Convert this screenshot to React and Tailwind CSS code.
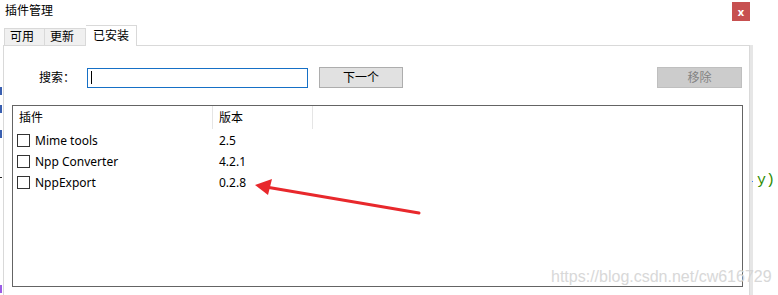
import React from "react";

const font = { fontFamily: '"Noto Sans", "Noto Sans CJK SC", sans-serif' };

function Checkbox() {
  return <div className="w-[13px] h-[13px] border border-[#333333] bg-white shrink-0" />;
}

function Row({ name, ver }) {
  return (
    <div className="flex items-center h-[21px] text-[12px] text-[#000000]">
      <div className="w-[200px] flex items-center pl-[4px] gap-[5px]">
        <Checkbox />
        <span>{name}</span>
      </div>
      <span className="pl-[6px]">{ver}</span>
    </div>
  );
}

export default function App() {
  return (
    <div className="relative w-[778px] h-[295px] bg-white overflow-hidden" style={font}>
      {/* background editor fragments on the left edge */}
      <div className="absolute left-0 top-[87px] w-[2px] h-[8px] bg-[#3a5fb0]" />
      <div className="absolute left-0 top-[105px] w-[2px] h-[8px] bg-[#3a5fb0]" />
      <div className="absolute left-0 top-[130px] w-[2px] h-[8px] bg-[#3a5fb0]" />
      <div className="absolute left-0 top-[177px] w-[2px] h-[1px] bg-[#222]" />
      <div className="absolute left-0 top-[285px] w-[2px] h-[8px] bg-[#9b5de5]" />

      {/* title bar */}
      <div className="flex items-start justify-between h-[25px]">
        <div className="pl-[5px] pt-[2px] text-[12px] text-[#000000] leading-[18px]">插件管理</div>
        <div className="mt-[2px] mr-[28px] w-[18px] h-[19px] bg-[#c75050] flex items-center justify-center text-white text-[11px] font-bold leading-none">
          x
        </div>
      </div>

      {/* tabs */}
      <div className="flex items-end pl-[4px] h-[20px] relative z-10">
        <div className="w-[41px] h-[17px] bg-[#f0f0f0] border border-[#d9d9d9] border-b-0 text-[12px] leading-[16px] pl-[5px]">可用</div>
        <div className="w-[41px] h-[17px] bg-[#f0f0f0] border border-[#d9d9d9] border-l-0 border-b-0 text-[12px] leading-[16px] pl-[5px]">更新</div>
        <div className="w-[51px] h-[21px] bg-white border border-[#d9d9d9] border-l-0 border-b-0 mb-[-1px] text-[12px] leading-[19px] pl-[7px]">已安装</div>
      </div>

      {/* panel */}
      <div className="flex">
        <div className="ml-[3px] w-[747px] h-[260px] border-t border-l border-r border-[#d9d9d9] bg-white">
          <div className="flex items-center h-[21px] mt-[21px]">
            <div className="w-[71px] text-right text-[12px] text-black">搜索：</div>
            <div className="ml-[12px] w-[221px] h-[20px] border border-[#1670c6] flex items-center pl-[3px]">
              <div className="w-px h-[13px] bg-black" />
            </div>
            <div className="ml-[11px] w-[84px] h-[21px] bg-[#e1e1e1] border border-[#adadad] flex items-center justify-center text-[12px] text-black">
              下一个
            </div>
            <div className="ml-[254px] w-[85px] h-[21px] bg-[#cccccc] border border-[#bfbfbf] flex items-center justify-center text-[12px] text-[#838383]">
              移除
            </div>
          </div>

          <div className="ml-[8px] mt-[17px] w-[731px] h-[182px] border border-[#646464] bg-white">
            <div className="flex h-[23px] text-[12px] text-black">
              <div className="w-[200px] pl-[6px] flex items-center border-r border-[#e5e5e5]">插件</div>
              <div className="w-[100px] pl-[6px] flex items-center border-r border-[#e5e5e5]">版本</div>
            </div>
            <div className="pt-[1px]">
              <Row name="Mime tools" ver="2.5" />
              <Row name="Npp Converter" ver="4.2.1" />
              <Row name="NppExport" ver="0.2.8" />
            </div>
          </div>
        </div>
        <div className="w-[3px] h-[250px] bg-[#e6e6e6]" />
      </div>

      {/* background editor text on the right */}
      <div className="absolute left-[752px] top-[181px] w-[1px] h-[1px] bg-[#3b82f6]" />
      <span
        className="absolute left-[757px] top-[170px] text-[15px] text-[#2e8b00]"
        style={{ fontFamily: '"Liberation Mono", monospace' }}
      >
        y)
      </span>

      {/* red arrow annotation */}
      <svg className="absolute left-0 top-0 pointer-events-none" width="778" height="295">
        <line x1="419" y1="213" x2="266" y2="187" stroke="#e8282c" strokeWidth="3" strokeLinecap="round" />
        <polygon points="255,185 272,179 268,195" fill="#e8282c" />
      </svg>

      {/* watermark */}
      <span
        className="absolute left-[551px] top-[265px] text-[16px] text-[#d4d4d4] opacity-90"
        style={{ fontFamily: '"Liberation Sans", Arial, sans-serif' }}
      >
        https://blog.csdn.net/cw616729
      </span>
    </div>
  );
}
